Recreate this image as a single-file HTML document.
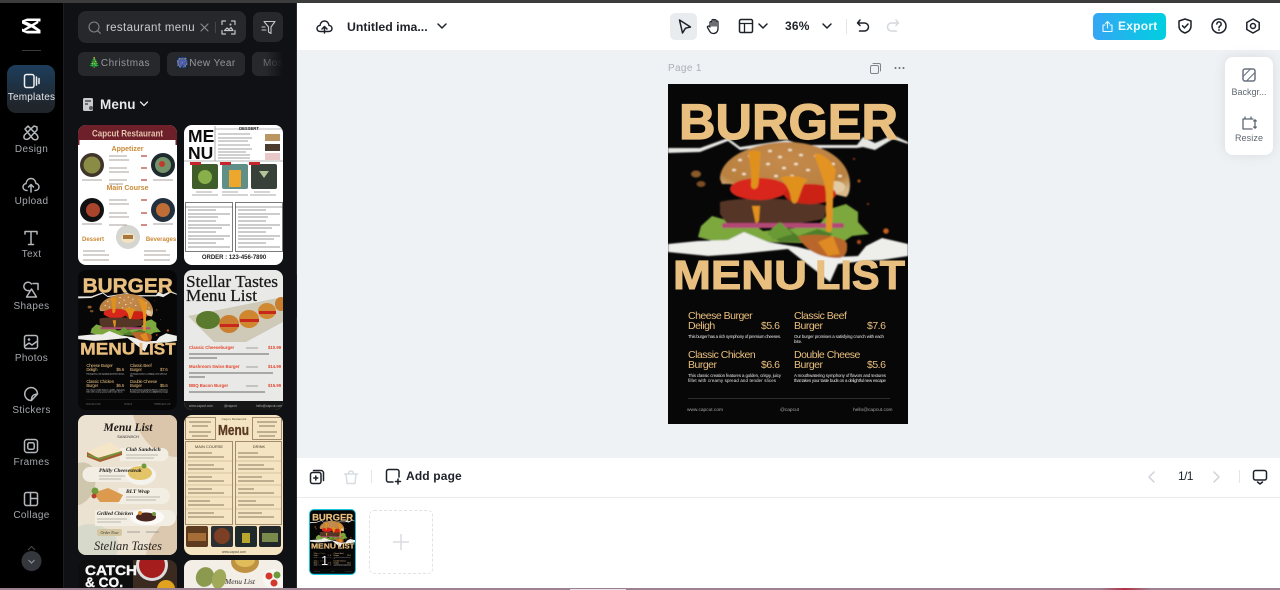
<!DOCTYPE html>
<html>
<head>
<meta charset="utf-8">
<title>Editor</title>
<style>
html,body{margin:0;padding:0;width:1280px;height:590px;overflow:hidden}
body{position:relative;background:#fff;font-family:"Liberation Sans","Noto Sans CJK SC",sans-serif}
.a{position:absolute}
svg{display:block;overflow:hidden}
.s{fill:none;stroke:currentColor;stroke-width:1.5;stroke-linecap:round;stroke-linejoin:round}
.nav{position:absolute;left:0;width:63px;text-align:center;font-size:10px;letter-spacing:.35px;color:#a4a8ad;line-height:12px}
.ic{position:absolute;width:18px;height:18px;left:22px;color:#b4b7bb}
.tag{position:absolute;top:52px;height:24px;line-height:24px;background:#26282c;border-radius:6px;color:#95989c;font-size:10px;letter-spacing:.45px;text-align:center;white-space:nowrap;overflow:hidden}
.th{position:absolute;width:99px;height:140px;border-radius:8px;overflow:hidden;filter:blur(.25px)}
.t{white-space:nowrap;position:absolute}
</style>
</head>
<body>
<svg width="0" height="0" style="position:absolute">
<defs>
<filter id="b"><feGaussianBlur stdDeviation=".7"/></filter>
<radialGradient id="bun" cx=".5" cy=".35" r=".7"><stop offset="0" stop-color="#c48a4c"/><stop offset=".75" stop-color="#b9803f"/><stop offset="1" stop-color="#d9b98a"/></radialGradient>
<symbol id="burger" viewBox="0 0 240 340">
<rect width="240" height="340" fill="#070707"/>
<g filter="url(#b)">
<path d="M0 64L32 64 60 54 72 63 119 56 135 61 189 61 195 53 207 59 225 51 240 58V60L225 55 207 66 195 63 189 64 135 64 119 59 72 66 60 57 32 68 0 69Z" fill="#e6e6e3"/>
<ellipse cx="28" cy="90" rx="5" ry="3.500" fill="#8a5a2a"/><ellipse cx="33" cy="100" rx="4.500" ry="3" fill="#7c4d22"/>
<circle cx="218" cy="147" r="2.800" fill="#c85d1a"/><circle cx="191" cy="97" r="1.500" fill="#b5541c"/><circle cx="191" cy="158" r="2.200" fill="#a8481a"/><circle cx="186" cy="75" r="1" fill="#a8481a"/><circle cx="200" cy="120" r="1" fill="#a8481a"/>
<path d="M30 153L33 142 44 132 58 136 70 130 95 147 150 142 165 124 178 120 190 128 190 138 201 150 184 152 172 160 95 158 60 156 45 157Z" fill="#7ba83c"/>
<path d="M100 150L112 138 130 152 150 145 165 150 150 158 112 158Z" fill="#4f7d2a"/>
<path d="M52 118C70 113 130 113 159 122L156 135 110 143 60 141 52 130Z" fill="#553425"/>
<rect x="54" y="139" width="122" height="5" rx="2" fill="#b24a74"/>
<path d="M100 148L112 138 125 150 105 156Z" fill="#6a9a34"/>
<path d="M52 95C52 72 88 58 119 58 152 58 182 74 182 100 182 108 180 112 178 113L150 106 60 100 54 100Z" fill="url(#bun)"/>
<g fill="#efe0c4">
<ellipse cx="72" cy="76" rx="2" ry="1.300"/><ellipse cx="82" cy="72" rx="2" ry="1.300"/><ellipse cx="66" cy="86" rx="2" ry="1.300"/><ellipse cx="102" cy="67" rx="2" ry="1.300"/><ellipse cx="112" cy="73" rx="2" ry="1.300"/><ellipse cx="122" cy="66" rx="2" ry="1.300"/><ellipse cx="133" cy="71" rx="2" ry="1.300"/><ellipse cx="100" cy="80" rx="2" ry="1.300"/><ellipse cx="116" cy="84" rx="2" ry="1.300"/><ellipse cx="128" cy="80" rx="2" ry="1.300"/><ellipse cx="140" cy="86" rx="2" ry="1.300"/><ellipse cx="108" cy="92" rx="2" ry="1.300"/><ellipse cx="124" cy="92" rx="2" ry="1.300"/><ellipse cx="148" cy="72" rx="2" ry="1.300"/><ellipse cx="165" cy="80" rx="2" ry="1.300"/><ellipse cx="172" cy="92" rx="2" ry="1.300"/><ellipse cx="158" cy="90" rx="2" ry="1.300"/><ellipse cx="76" cy="90" rx="2" ry="1.300"/>
</g>
<ellipse cx="167" cy="103" rx="10" ry="6" fill="#e2cba4"/>
<ellipse cx="91" cy="105" rx="29" ry="11" fill="#d9261c"/>
<ellipse cx="142" cy="110" rx="26" ry="10" fill="#cc2016"/>
<path d="M80 68C84 66 90 66 93 68 91 78 92 92 90 102 88 106 84 106 83 102 84 90 82 78 80 68Z" fill="#e0911f"/>
<path d="M112 94C120 90 132 92 140 96 134 100 133 110 129 118 126 121 124 119 123 115 122 106 118 100 112 94Z" fill="#e0911f"/>
<path d="M146 70C152 68 162 74 168 86 166 94 165 105 165 118L164 145C163 149 158 149 158 145L158 110C157 98 152 88 146 70Z" fill="#e39322"/>
<path d="M84 122H92L91 136C90 140 87 140 87 136Z" fill="#e0911f"/>
<path d="M0 160L30 157 60 156 76 148 100 158 130 163 168 173 190 172 198 162 214 154 240 160V172L214 176 196 177 170 180 162 198 152 190 120 165 70 170 40 172 0 168Z" fill="#eeeeeb"/>
<path d="M130 152C150 149 178 152 179 160 180 170 176 174 170 174 150 174 135 164 130 152Z" fill="#b8662c"/>
<path d="M150 158L165 152 172 170 160 172Z" fill="#df8a24"/>
</g>
<text x="11" y="55" font-size="50" font-weight="700" fill="#e9bf7f" stroke="#e9bf7f" stroke-width="1.200" textLength="219" lengthAdjust="spacingAndGlyphs" font-family="Liberation Sans">BURGER</text>
<text x="5" y="205" font-size="41" font-weight="700" fill="#e9bf7f" stroke="#e9bf7f" stroke-width="1" textLength="134" lengthAdjust="spacingAndGlyphs" font-family="Liberation Sans">MENU</text>
<text x="147" y="205" font-size="41" font-weight="700" fill="#e9bf7f" stroke="#e9bf7f" stroke-width="1" textLength="90" lengthAdjust="spacingAndGlyphs" font-family="Liberation Sans">LIST</text>
<g font-family="Liberation Sans" font-size="10.500" fill="#e9bf7f" letter-spacing="-.5">
<text x="20" y="235">Cheese Burger</text><text x="20" y="245">Deligh</text><text x="93" y="245">$5.6</text>
<text x="126" y="235">Classic Beef</text><text x="126" y="245">Burger</text><text x="199" y="245">$7.6</text>
<text x="20" y="274">Classic Chicken</text><text x="20" y="284">Burger</text><text x="93" y="284">$6.6</text>
<text x="126" y="274">Double Cheese</text><text x="126" y="284">Burger</text><text x="199" y="284">$5.6</text>
</g>
<g font-family="Liberation Sans" font-size="4.400" fill="#e6e6e6">
<text x="20" y="254" textLength="93">This burger has a rich symphony of premium cheeses.</text>
<text x="126" y="254" textLength="90">Our burger promises a satisfying crunch with each</text>
<text x="126" y="259">bite.</text>
<text x="20" y="293" textLength="93">This classic creation features a golden, crispy, juicy</text>
<text x="20" y="298" textLength="88">fillet with creamy spread and tender slices</text>
<text x="126" y="293" textLength="92">A mouthwatering symphony of flavors and textures</text>
<text x="126" y="298" textLength="92">that takes your taste buds on a delightful new escape</text>
</g>
<path d="M20 314.500H222" stroke="#2d2d2d"/>
<g font-family="Liberation Sans" font-size="4.800" fill="#a5a5a5">
<text x="19" y="327">www.capcut.com</text><text x="112" y="327">@capcut</text><text x="185" y="327">hello@capcut.com</text>
</g>
</symbol>
</defs>
</svg>

<!-- top strip -->
<div class="a" style="left:0;top:0;width:1280px;height:3px;background:#3c3c3c"></div>

<!-- rail -->
<div class="a" style="left:0;top:3px;width:63px;height:585px;background:#000"></div>
<div class="a" style="left:63px;top:3px;width:233px;height:585px;background:#101114;border-left:1px solid #1c1d20;box-sizing:border-box"></div>
<div class="a" style="left:296px;top:3px;width:1px;height:585px;background:#2a2a2a"></div>

<svg class="a" style="left:20px;top:17px" width="23" height="19" viewBox="0 0 23 19"><path d="M2 3.500L7 1.500H20.500V4.500H8.500L20.500 13V16.500H7L2 14.500V11.500L7 13.500H17L2 6.500Z M2 6.500V3.500M20.500 4.500L13 8.500" fill="#fff"/><path d="M4.500 5L18 13 M18 4.800 4.500 13" stroke="#fff" stroke-width="2.500" fill="none"/><path d="M5 4h12l-5.500 3.200zM5 13.800h12l-5.500-3.400z" fill="#000"/></svg>
<div class="a" style="left:22px;top:50px;width:19px;height:1px;background:#3a3a3a"></div>

<div class="a" style="left:7px;top:65px;width:48px;height:48px;border-radius:9px;background:linear-gradient(#1d3e5c,#20252b 85%)"></div>
<svg class="ic" style="top:72px;color:#f0f0f0" viewBox="0 0 18 18"><rect class="s" x="2.500" y="2.500" width="9.500" height="13" rx="2"/><path class="s" d="M14.500 5v8M17 6.500v5"/></svg>
<div class="nav" style="top:92px;color:#e4e6e8;letter-spacing:.2px">Templates</div>

<svg class="ic" style="top:124px" viewBox="0 0 18 18"><path class="s" d="M3 5l3-3 9 9c1.500 2 1 3.500 0 4.200s-2.500.8-4-.2zM15 3L12 2 2.500 11c-1 2-.5 3.500.5 4s2.500.6 4-.5l8-8.500z"/></svg>
<div class="nav" style="top:144px">Design</div>

<svg class="ic" style="top:176px" viewBox="0 0 18 18"><path class="s" d="M5 14.500C2.500 14.500 1 13 1 11c0-2 1.500-3.200 3-3.400C4.500 4.500 6.500 2.500 9 2.500s4.500 2 5 5c1.700.2 3 1.500 3 3.500 0 2-1.500 3.500-4 3.500M9 16V9M6.500 11L9 8.500l2.500 2.500"/></svg>
<div class="nav" style="top:196px">Upload</div>

<svg class="ic" style="top:229px" viewBox="0 0 18 18"><path class="s" d="M3 5V2.500h12V5M9 2.500v13M6.500 15.500h5"/></svg>
<div class="nav" style="top:249px">Text</div>

<svg class="ic" style="top:281px" viewBox="0 0 18 18"><path class="s" d="M7 9.500A4.200 4.200 0 1 1 9.500 3M11 2.500h5v6M9.500 8l5 8H4.500z"/></svg>
<div class="nav" style="top:301px">Shapes</div>

<svg class="ic" style="top:333px" viewBox="0 0 18 18"><rect class="s" x="2.500" y="2.500" width="13" height="13" rx="2"/><path class="s" d="M3 13l4-3 3 2 5.500-4"/><circle cx="7" cy="6.500" r="1.300" fill="currentColor"/></svg>
<div class="nav" style="top:353px">Photos</div>

<svg class="ic" style="top:385px" viewBox="0 0 18 18"><path class="s" d="M9 2.500a6.500 6.500 0 0 1 6.500 6.500l-6 6.500A6.500 6.500 0 0 1 9 2.500zM9.500 15.500c0-4 1-6 6-6.500"/></svg>
<div class="nav" style="top:405px">Stickers</div>

<svg class="ic" style="top:437px" viewBox="0 0 18 18"><rect class="s" x="2.500" y="2.500" width="13" height="13" rx="2.500"/><rect class="s" x="5.800" y="5.800" width="6.400" height="6.400" rx="1.500"/></svg>
<div class="nav" style="top:457px">Frames</div>

<svg class="ic" style="top:490px" viewBox="0 0 18 18"><rect class="s" x="2.500" y="2.500" width="13" height="13" rx="2"/><path class="s" d="M8.500 2.500v13M8.500 8.500h7"/></svg>
<div class="nav" style="top:510px">Collage</div>

<svg class="a" style="left:21px;top:543px" width="21" height="28" viewBox="0 0 21 28"><path d="M7 7l3.500-3.500L14 7" stroke="#45484c" fill="none"/><circle cx="10.500" cy="18" r="10" fill="#34373c"/><path d="M7.500 17l3 3 3-3" stroke="#8d9196" stroke-width="1.200" fill="none"/></svg>

<!-- search -->
<div class="a" style="left:78px;top:11px;width:168px;height:32px;border-radius:8px;background:#26282c"></div>
<svg class="a" style="left:87px;top:20px;color:#7f8388" width="15" height="15" viewBox="0 0 15 15"><circle class="s" style="stroke-width:1.100" cx="7" cy="7" r="5"/><path class="s" style="stroke-width:1.100" d="M10.800 10.800l2.500 2.500"/></svg>
<div class="t" style="left:106px;top:20px;font-size:11.500px;letter-spacing:.35px;color:#c9cbce;line-height:16px">restaurant menu</div>
<svg class="a" style="left:199px;top:22px;color:#8a8d91" width="11" height="11" viewBox="0 0 11 11"><path class="s" style="stroke-width:1.100" d="M2 2l7 7M9 2l-7 7"/></svg>
<div class="a" style="left:215px;top:22px;width:1px;height:11px;background:#46484c"></div>
<svg class="a" style="left:221px;top:20px;color:#c4c6c9" width="15" height="15" viewBox="0 0 15 15"><path class="s" style="stroke-width:1.200" d="M1 4.500V1h3.500M10.500 1H14v3.500M1 10.500V14h3.500M10.500 14H14v-3.500M3.500 10.500l2.500-2.500 2 1.500 2-2 2 3z"/><circle cx="9.500" cy="4.500" r="1" fill="currentColor"/></svg>
<div class="a" style="left:253px;top:12px;width:30px;height:30px;border-radius:7px;background:#26282c"></div>
<svg class="a" style="left:261px;top:20px;color:#c4c6c9" width="15" height="15" viewBox="0 0 15 15"><path class="s" style="stroke-width:1.100" d="M3 1.500h11L10 7v6.500L7.500 12V7zM1 7h3M1 10h4"/></svg>

<div class="tag" style="left:78px;width:82px">🎄Christmas</div>
<div class="tag" style="left:167px;width:78px">🎆New Year</div>
<div class="tag" style="left:252px;width:31px;text-align:left;padding-left:11px;box-sizing:border-box;color:#6e7174">Most</div>
<div class="a" style="left:266px;top:52px;width:17px;height:24px;background:linear-gradient(90deg,rgba(16,17,20,0),#101114)"></div>

<svg class="a" style="left:82px;top:97px" width="13" height="15" viewBox="0 0 13 15"><rect x="1" y="1" width="10" height="13" rx="1.500" fill="#c9cbce"/><path d="M3 4h6M3 7h3" stroke="#33363a" stroke-width="1.200"/><circle cx="9" cy="11" r="2" fill="#55585c"/></svg>
<div class="t" style="left:100px;top:96px;font-size:13.500px;font-weight:700;letter-spacing:.1px;color:#e6e7e9;line-height:17px">Menu</div>
<svg class="a" style="left:139px;top:100px;color:#e6e7e9" width="10" height="8" viewBox="0 0 10 8"><path class="s" style="stroke-width:1.300" d="M1.500 2l3.500 3.500L8.500 2"/></svg>

<!-- template 1 -->
<div class="th" style="left:78px;top:125px;background:#fff">
<svg width="99" height="140" viewBox="0 0 99 140">
<rect width="99" height="15" fill="#6d1f2a"/><rect y="15" width="1.500" height="5" fill="#6d1f2a"/><rect x="97.500" y="15" width="1.500" height="5" fill="#6d1f2a"/>
<text x="14" y="11.500" font-size="9.500" font-weight="700" fill="#e4c4ad" textLength="71" lengthAdjust="spacingAndGlyphs" font-family="Liberation Sans">Capcut Restaurant</text>
<g font-family="Liberation Sans" font-weight="700" fill="#c98a35">
<text x="49.500" y="26" text-anchor="middle" font-size="7">Appetizer</text>
<text x="49.500" y="65" text-anchor="middle" font-size="7">Main Course</text>
<text x="15" y="116" text-anchor="middle" font-size="6">Dessert</text>
<text x="83" y="116" text-anchor="middle" font-size="6">Beverages</text>
</g>
<circle cx="14" cy="40" r="12" fill="#40352b"/><circle cx="14" cy="40" r="8.500" fill="#8a8b45"/>
<circle cx="85" cy="40" r="12" fill="#1d2a2e"/><circle cx="85" cy="40" r="8" fill="#75936b"/><circle cx="84" cy="39" r="3" fill="#c0392b"/>
<circle cx="14" cy="85" r="12" fill="#111"/><circle cx="15" cy="85" r="7" fill="#a9452c"/>
<circle cx="85" cy="85" r="12" fill="#22303e"/><circle cx="85" cy="85" r="7" fill="#bd6d35"/>
<circle cx="50" cy="112" r="12" fill="#d5d5d2"/><ellipse cx="50" cy="113" rx="7" ry="5" fill="#f1e5c0"/><rect x="45" y="110" width="10" height="4" fill="#a9773f"/>
<g stroke="#a8a09e" stroke-width=".9">
<path d="M31 31h18M31 35h20M31 43h18M31 47h20M31 55h18M31 59h14M31 75h18M31 79h20M31 88h18M31 92h20M31 100h18M5 126h22M5 130h26M5 135h26M66 126h22M66 130h26M66 135h26M4 55h20M75 55h20M4 99h20M75 99h20"/>
</g>
<g stroke="#c06a5f" stroke-width="1.500"><path d="M63 31h6M63 43h6M63 55h6M63 75h6M63 88h6M63 100h6"/></g>
</svg>
</div>

<!-- template 2 -->
<div class="th" style="left:184px;top:125px;background:#fff">
<svg width="99" height="140" viewBox="0 0 99 140">
<g font-family="Liberation Sans" font-weight="700" fill="#0b0b0b" font-size="17.500"><text x="4" y="17">ME</text><text x="4" y="34">NU</text></g>
<path d="M31 1v35H98M0 36h99M31 4h67" stroke="#777" stroke-width=".6" fill="none"/>
<text x="65" y="5" text-anchor="middle" font-size="4.200" font-weight="700" fill="#222" font-family="Liberation Sans">DESSERT</text>
<g stroke="#a0a0a0" stroke-width=".9"><path d="M34 9h32M34 13h34M34 16h30M34 20h32M34 24h34M34 27h28M34 30h32M34 33h32"/></g>
<rect x="81" y="9" width="15" height="7" fill="#b99664"/><rect x="81" y="19" width="15" height="7" fill="#4a3d30"/><rect x="81" y="28" width="15" height="7" fill="#e8c8c8"/>
<rect x="8" y="39" width="26" height="25" rx="2" fill="#3f5d2a"/><circle cx="21" cy="52" r="7" fill="#87b04a"/>
<rect x="38" y="39" width="26" height="25" rx="2" fill="#5f8f86"/><rect x="45" y="45" width="12" height="17" fill="#eca72c"/>
<rect x="67" y="39" width="26" height="25" rx="2" fill="#38403a"/><path d="M75 46h10l-5 7z" fill="#b7c39a"/>
<g fill="#c7242b"><rect x="6" y="37" width="11" height="3"/><rect x="36" y="37" width="11" height="3"/><rect x="65" y="37" width="11" height="3"/></g>
<g stroke="#aaa" stroke-width=".9"><path d="M12 67h16M38 67h16M70 67h16M8 70h26M38 70h26M66 70h26"/></g>
<rect x="1.500" y="77.500" width="47" height="49" fill="none" stroke="#444" stroke-width=".7"/><rect x="51.500" y="77.500" width="47" height="49" fill="none" stroke="#444" stroke-width=".7"/>
<path d="M1 82h48M51 82h48" stroke="#444" stroke-width=".6"/>
<g stroke="#999" stroke-width=".9"><path d="M4 85h28M4 89h42M4 92h30M4 96h28M4 100h42M4 103h34M4 107h28M4 111h42M4 114h36M4 118h28M4 122h42M54 85h28M54 89h42M54 92h30M54 96h28M54 100h42M54 103h34M54 107h28M54 111h42M54 114h36M54 118h28M54 122h42"/></g>
<text x="50" y="134" text-anchor="middle" font-size="6" font-weight="700" fill="#222" font-family="Liberation Sans">ORDER : 123-456-7890</text>
</svg>
</div>

<!-- template 3 burger -->
<div class="th" style="left:78px;top:270px"><svg width="99" height="140" viewBox="0 0 240 340"><use href="#burger" width="240" height="340"/></svg></div>

<!-- template 4 -->
<div class="th" style="left:184px;top:270px;background:#e9e9e7">
<svg width="99" height="140" viewBox="0 0 99 140">
<g font-family="Liberation Serif" fill="#191919" stroke="#191919" stroke-width=".25" font-size="16.500"><text x="2" y="17" textLength="92" lengthAdjust="spacingAndGlyphs">Stellar Tastes</text><text x="2" y="31" textLength="71" lengthAdjust="spacingAndGlyphs">Menu List</text></g>
<path d="M4 46L99 27V52L62 72 30 72Z" fill="#cfc9b8"/>
<ellipse cx="24" cy="50" rx="12" ry="9" fill="#5a7a2e"/>
<ellipse cx="45" cy="54" rx="10" ry="9" fill="#c97f2f"/><rect x="36" y="54" width="19" height="3" fill="#c9261c"/>
<ellipse cx="65" cy="49" rx="10" ry="9" fill="#cf862e"/><rect x="56" y="49" width="19" height="3" fill="#c9261c"/>
<ellipse cx="83" cy="41" rx="9" ry="8" fill="#d08a33"/><rect x="75" y="41" width="17" height="3" fill="#c9261c"/>
<ellipse cx="97" cy="34" rx="6" ry="7" fill="#c87e2d"/>
<g font-family="Liberation Sans" font-size="4.300" font-weight="700" fill="#e4452c">
<text x="5" y="79">Classic Cheeseburger</text><text x="84" y="79">$10.99</text>
<text x="5" y="98">Mushroom Swiss Burger</text><text x="84" y="98">$14.99</text>
<text x="5" y="117">BBQ Bacon Burger</text><text x="84" y="117">$15.99</text>
</g>
<path d="M62 78h12M62 97h12M62 116h12" stroke="#888" stroke-width=".8"/>
<g stroke="#666" stroke-width=".9"><path d="M5 84h80M5 88h28M5 103h84M5 107h16M5 122h76"/></g>
<rect y="131" width="99" height="9" fill="#171717"/>
<g font-family="Liberation Sans" font-size="3.200" fill="#aaa"><text x="5" y="137">www.capcut.com</text><text x="40" y="137">@capcut</text><text x="72" y="137">hello@capcut.com</text></g>
</svg>
</div>

<!-- template 5 -->
<div class="th" style="left:78px;top:415px;background:#ebe2d2">
<svg width="99" height="140" viewBox="0 0 99 140">
<path d="M55 0H99V42C80 42 62 26 55 0Z" fill="#dcc6ab"/>
<path d="M0 48C20 44 22 68 12 82 5 90 0 90 0 90Z" fill="#cfc7ad"/>
<path d="M0 112C18 102 50 120 38 140H0Z" fill="#d7d9cb"/>
<path d="M99 100V140H68C70 125 80 108 99 100Z" fill="#dcc8ae"/>
<text x="50" y="16" text-anchor="middle" font-size="11.500" font-style="italic" font-weight="700" fill="#1c1714" font-family="Liberation Serif">Menu List</text>
<text x="50" y="23" text-anchor="middle" font-size="4" fill="#333" font-family="Liberation Sans">SANDWICH</text>
<path d="M42 33H84a5 5 0 0 1 0 13H42ZM12 52H60V67H12a7 7 0 0 1 0-15ZM40 73H84a6 6 0 0 1 0 16H40ZM17 95H90a7 7 0 0 1 0 16H17Z" fill="#f2eee4"/>
<path d="M9 37L32 27 44 36 20 43Z" fill="#f4e6c6"/><path d="M9 37L20 43 44 36V40L22 47 9 42Z" fill="#a65c30"/><path d="M10 40L22 44 43 37" stroke="#6f9a3a" stroke-width="1.500" fill="none"/>
<ellipse cx="63" cy="60" rx="15" ry="10" fill="#f5f3ee"/><ellipse cx="62" cy="58" rx="12" ry="7" fill="#e4c468"/><circle cx="66" cy="51" r="2.500" fill="#6f9a3a"/>
<path d="M15 78L30 73 45 80 41 87H22Z" fill="#dc9a4f"/><circle cx="17" cy="76" r="3.500" fill="#6f9a3a"/><circle cx="16" cy="81" r="2.500" fill="#b5432c"/>
<ellipse cx="69" cy="102" rx="17" ry="8" fill="#fbfaf7"/><ellipse cx="68" cy="102" rx="10" ry="4.500" fill="#4a2620"/><circle cx="62" cy="98" r="2" fill="#d9902f"/><circle cx="76" cy="99" r="2" fill="#6f9a3a"/>
<g font-family="Liberation Serif" font-size="5.500" font-style="italic" font-weight="700" fill="#1c1714"><text x="48" y="36">Club Sandwich</text><text x="21" y="57">Philly Cheesesteak</text><text x="48" y="78">BLT Wrap</text><text x="19" y="100">Grilled Chicken</text></g>
<g stroke="#a8a39a" stroke-width=".8"><path d="M48 40h32M48 43h28M21 61h26M21 64h22M48 82h34M48 85h30M19 104h30M19 107h24"/></g>
<rect x="19" y="114" width="25" height="7" rx="2" fill="#d4c6a1"/>
<text x="31.500" y="119" text-anchor="middle" font-size="4" font-style="italic" fill="#333" font-family="Liberation Serif">Order Now</text>
<path d="M49 117h13M68 117h13" stroke="#888" stroke-width=".8"/>
<text x="50" y="135" text-anchor="middle" font-size="13" font-style="italic" fill="#2a2622" textLength="68" lengthAdjust="spacingAndGlyphs" font-family="Liberation Serif">Stellan Tastes</text>
</svg>
</div>

<!-- template 6 -->
<div class="th" style="left:184px;top:415px;background:#f5e4c2">
<svg width="99" height="140" viewBox="0 0 99 140">
<g fill="none" stroke="#6b5138" stroke-width=".6"><rect x="1.500" y="2.500" width="30" height="22"/><rect x="68.500" y="2.500" width="29" height="22"/><rect x="1.500" y="26.500" width="47" height="83"/><rect x="51.500" y="26.500" width="46" height="83"/></g>
<text x="34" y="20" font-size="15" font-weight="700" fill="#5a3a22" stroke="#5a3a22" stroke-width=".3" textLength="31" lengthAdjust="spacingAndGlyphs" font-family="Liberation Sans">Menu</text>
<text x="50" y="5" text-anchor="middle" font-size="3" fill="#553" font-family="Liberation Sans">Cagu's Restaurant</text>
<g font-family="Liberation Sans" font-size="4" fill="#4b3a28" text-anchor="middle"><text x="25" y="33">MAIN COURSE</text><text x="75" y="33">DRINK</text></g>
<g stroke="#8a7860" stroke-width=".9"><path d="M5 7h22M8 11h16M5 17h22M8 21h16M73 7h20M75 11h16M73 17h20M75 21h16M4 38h24M4 42h36M4 50h26M4 54h36M4 62h24M4 66h36M4 74h24M4 78h36M4 86h22M4 90h36M4 98h26M4 102h36M54 38h20M54 42h36M54 50h26M54 54h36M54 62h24M54 66h36M54 74h16M54 78h36M54 86h18M54 90h36M54 98h24M54 102h36"/></g>
<g stroke="#b9a27e" stroke-width=".6"><path d="M2 46h46M2 58h46M2 70h46M2 82h46M2 94h46M52 46h45M52 58h45M52 70h45M52 82h45M52 94h45"/></g>
<rect x="2" y="111" width="22" height="21" rx="2" fill="#5f3b20"/><rect x="4" y="118" width="18" height="8" fill="#a66e37"/>
<rect x="27" y="111" width="22" height="21" rx="2" fill="#2c3033"/><circle cx="38" cy="121" r="8" fill="#7b3f25"/>
<rect x="51" y="111" width="22" height="21" rx="2" fill="#1f2a2a"/><rect x="58" y="118" width="8" height="10" fill="#b9a62f"/>
<rect x="75" y="111" width="22" height="21" rx="2" fill="#22282a"/><rect x="78" y="118" width="16" height="9" fill="#7a8a4a"/>
<text x="50" y="138" text-anchor="middle" font-size="3.200" fill="#443" font-family="Liberation Sans">www.capcut.com</text>
</svg>
</div>

<!-- template 7 (cut off at the frame edge) -->
<div class="th" style="left:78px;top:560px;height:28px;border-radius:8px 8px 0 0;background:#0e0e0e;filter:none">
<svg width="99" height="28" viewBox="0 0 99 28">
<rect x="55" y="0" width="44" height="28" fill="#3a2a20"/>
<circle cx="74" cy="5" r="16" fill="#dcdcdc"/><circle cx="74" cy="5" r="13" fill="#a61d1d"/>
<circle cx="88" cy="29" r="9" fill="#e0a21f"/>
<g font-family="Liberation Sans" font-weight="700" fill="#f6f6f6" stroke="#f6f6f6" stroke-width=".4" font-size="14"><text x="7" y="15" textLength="52" lengthAdjust="spacingAndGlyphs">CATCH</text><text x="7" y="27" textLength="38" lengthAdjust="spacingAndGlyphs">&amp; CO.</text></g>
</svg>
</div>

<!-- template 8 (cut off at the frame edge) -->
<div class="th" style="left:184px;top:560px;height:28px;border-radius:8px 8px 0 0;background:#f3efe7;filter:none">
<svg width="99" height="28" viewBox="0 0 99 28">
<ellipse cx="61" cy="2" rx="14" ry="11" fill="#bf9242"/><ellipse cx="61" cy="0" rx="10" ry="7" fill="#e1bc5a"/>
<ellipse cx="21" cy="17" rx="9" ry="10" fill="#8b9a4e" transform="rotate(25 21 17)"/><ellipse cx="35" cy="19" rx="7" ry="10" fill="#a0a85a" transform="rotate(15 35 19)"/>
<circle cx="89" cy="19" r="10" fill="#f6f6f2"/><circle cx="85" cy="16" r="3.500" fill="#d4382c"/><circle cx="93" cy="15" r="3.500" fill="#6e9a3c"/><circle cx="90" cy="23" r="3.500" fill="#d4382c"/>
<text x="41" y="24" font-size="7.500" font-style="italic" fill="#2a2622" textLength="30" lengthAdjust="spacingAndGlyphs" font-family="Liberation Serif">Menu List</text>
</svg>
</div>

<!-- panel handle -->
<svg class="a" style="left:296px;top:274px" width="6" height="44" viewBox="0 0 6 44"><path d="M0 0C4 4 6 7 6 11V33C6 37 4 40 0 44Z" fill="#1b1c1f"/><path d="M3.500 18L1.800 22 3.500 26" stroke="#5a5d60" fill="none"/></svg>

<!-- top bar -->
<div class="a" style="left:297px;top:3px;width:983px;height:47px;background:#fff"></div>
<svg class="a" style="left:315px;top:17px;color:#1d2129" width="19" height="19" viewBox="0 0 19 19"><path class="s" d="M5.500 14.500C3 14.500 2 13 2 11.500c0-1.700 1.300-3 3-3.100C5.500 5.500 7.500 4 9.500 4s4 1.500 4.500 4.400c1.700.1 3 1.400 3 3.100 0 1.500-1 3-3.500 3H5.500zM9.500 16v-6M7 12l2.500-2.500L12 12"/></svg>
<div class="t" style="left:347px;top:19px;font-size:12.300px;font-weight:700;color:#1d2129;line-height:17px">Untitled ima...</div>
<svg class="a" style="left:436px;top:22px;color:#1d2129" width="12" height="9" viewBox="0 0 12 9"><path class="s" d="M2 2l4 4 4-4"/></svg>

<div class="a" style="left:670px;top:13px;width:27px;height:27px;border-radius:5px;background:#e8ecef"></div>
<svg class="a" style="left:676px;top:18px;color:#1d2129" width="17" height="17" viewBox="0 0 17 17"><path class="s" d="M3.500 2L14.500 9l-5 1.200-3 4.800z"/></svg>
<svg class="a" style="left:705px;top:17px;color:#1d2129" width="18" height="18" viewBox="0 0 18 18"><path class="s" style="stroke-width:1.300" d="M5 10V5.500a1 1 0 0 1 2 0V3.500a1 1 0 0 1 2 0a1 1 0 0 1 2 .2V5a1 1 0 0 1 2 0v6.500c0 3-2 5-4.500 5S5.500 15.500 4.500 14L2.500 10.500c-.5-1 .8-2 1.700-1.200L5 10M7 5.500V9M9 3.500V9M11 4V9"/></svg>
<svg class="a" style="left:738px;top:18px;color:#1d2129" width="16" height="16" viewBox="0 0 16 16"><rect class="s" x="1.500" y="1.500" width="13" height="13" rx="1.500"/><path class="s" d="M1.500 5.500h13M6.500 5.500v9" style="stroke-width:1.300"/></svg>
<svg class="a" style="left:757px;top:22px;color:#1d2129" width="12" height="9" viewBox="0 0 12 9"><path class="s" d="M2 2l4 4 4-4"/></svg>
<div class="t" style="left:785px;top:18px;font-size:12px;font-weight:700;letter-spacing:.2px;color:#1d2129;line-height:16px">36%</div>
<svg class="a" style="left:821px;top:22px;color:#1d2129" width="12" height="9" viewBox="0 0 12 9"><path class="s" d="M2 2l4 4 4-4"/></svg>
<div class="a" style="left:846px;top:19px;width:1px;height:15px;background:#e2e5e8"></div>
<svg class="a" style="left:855px;top:18px;color:#1d2129" width="16" height="16" viewBox="0 0 16 16"><path class="s" d="M5 2L2.500 5 5 7.500M3 5h6.500a3.800 3.800 0 0 1 0 8H4.500"/></svg>
<svg class="a" style="left:885px;top:18px;color:#d4d9de" width="16" height="16" viewBox="0 0 16 16"><path class="s" d="M11 2l2.500 3L11 7.500M13 5H6.500a3.800 3.800 0 0 0 0 8h5"/></svg>

<div class="a" style="left:1093px;top:13px;width:73px;height:27px;border-radius:5px;background:linear-gradient(90deg,#34a6f4,#00cfe0)"></div>
<svg class="a" style="left:1101px;top:20px;color:#e8fbff" width="13" height="13" viewBox="0 0 13 13"><path class="s" style="stroke-width:1.100" d="M4 5H2v6.500h9V5H9M6.500 8V1.500M4.500 3.500l2-2 2 2"/></svg>
<div class="t" style="left:1118px;top:18px;font-size:12px;font-weight:700;letter-spacing:.25px;color:#eafcff;line-height:16px">Export</div>
<svg class="a" style="left:1176px;top:17px;color:#1d2129" width="18" height="18" viewBox="0 0 18 18"><path class="s" d="M9 2l6 2v5c0 3.500-2.500 5.800-6 7-3.500-1.200-6-3.500-6-7V4zM6.500 8.800l2 2L12 7"/></svg>
<svg class="a" style="left:1210px;top:17px;color:#1d2129" width="18" height="18" viewBox="0 0 18 18"><circle class="s" cx="9" cy="9" r="7"/><path class="s" d="M6.800 7a2.200 2.200 0 1 1 3.400 1.900c-.8.500-1.200 1-1.200 1.800"/><circle cx="9" cy="13" r=".9" fill="currentColor"/></svg>
<svg class="a" style="left:1244px;top:17px;color:#1d2129" width="18" height="18" viewBox="0 0 18 18"><path class="s" d="M9 2l6.200 3.500v7L9 16l-6.200-3.500v-7z"/><circle class="s" cx="9" cy="9" r="2.500"/></svg>

<!-- canvas -->
<div class="a" style="left:297px;top:50px;width:983px;height:408px;background:#eff2f5"></div>
<div class="t" style="left:668px;top:62px;font-size:10px;letter-spacing:.35px;color:#a9b0b8;line-height:13px">Page 1</div>
<svg class="a" style="left:869px;top:62px;color:#7c848c" width="13" height="13" viewBox="0 0 13 13"><rect class="s" style="stroke-width:1" x="1.500" y="3.500" width="8" height="8" rx="1.500"/><path class="s" style="stroke-width:1" d="M4 1.500h6a1.500 1.500 0 0 1 1.500 1.500v6"/></svg>
<svg class="a" style="left:893px;top:65px" width="13" height="6" viewBox="0 0 13 6"><circle cx="2.500" cy="3" r="1" fill="#656c74"/><circle cx="6.500" cy="3" r="1" fill="#656c74"/><circle cx="10.500" cy="3" r="1" fill="#656c74"/></svg>
<svg class="a" style="left:668px;top:84px" width="240" height="340" viewBox="0 0 240 340"><use href="#burger" width="240" height="340"/></svg>

<div class="a" style="left:1225px;top:57px;width:48px;height:98px;border-radius:8px;background:#fff;box-shadow:0 0 12px rgba(60,70,80,.12)"></div>
<svg class="a" style="left:1241px;top:67px;color:#6b7280" width="16" height="16" viewBox="0 0 16 16"><rect class="s" x="2" y="2" width="12" height="12" rx="2"/><path class="s" d="M2.500 9L9 2.500M6 13.500L13.500 6" style="stroke-width:1.100"/></svg>
<div class="t" style="left:1225px;width:48px;top:86px;text-align:center;font-size:9px;color:#5e6670;line-height:12px">Backgr...</div>
<svg class="a" style="left:1241px;top:115px;color:#5e6670" width="16" height="16" viewBox="0 0 16 16"><path class="s" style="stroke-width:1.300" d="M2 4h10M2 4v10h9M4 2v2M10 2v2M14 5v8M12.800 6L14 4.800 15.200 6M12.800 12L14 13.200 15.200 12"/></svg>
<div class="t" style="left:1225px;width:48px;top:132px;text-align:center;font-size:9px;letter-spacing:.1px;color:#5e6670;line-height:12px">Resize</div>

<!-- page toolbar -->
<div class="a" style="left:297px;top:458px;width:983px;height:39px;background:#fff;border-bottom:1px solid #e9ebee"></div>
<svg class="a" style="left:309px;top:469px;color:#1d2129" width="16" height="16" viewBox="0 0 16 16"><rect class="s" x="1.500" y="3.500" width="10.500" height="11" rx="2"/><path class="s" d="M4.500 1.500H12a2.500 2.500 0 0 1 2.500 2.500v7.500M6.800 7v4M4.800 9h4"/></svg>
<svg class="a" style="left:343px;top:469px;color:#d8dde2" width="16" height="16" viewBox="0 0 16 16"><path class="s" d="M1.500 5h13M3 5l1 9.500h8L13 5M5.500 5C5.500 3 6.500 2 8 2s2.500 1 2.500 3"/></svg>
<div class="a" style="left:371px;top:470px;width:1px;height:13px;background:#e2e5e8"></div>
<svg class="a" style="left:385px;top:468px;color:#1d2129" width="17" height="17" viewBox="0 0 17 17"><path class="s" d="M8 14H3.500a2 2 0 0 1-2-2V3.500a2 2 0 0 1 2-2H12a2 2 0 0 1 2 2V9M13 11v5M10.500 13.500h5"/></svg>
<div class="t" style="left:406px;top:468px;font-size:12px;font-weight:700;letter-spacing:.15px;color:#1d2129;line-height:17px">Add page</div>

<svg class="a" style="left:1146px;top:470px;color:#ced3d8" width="12" height="14" viewBox="0 0 12 14"><path class="s" d="M8 2L3 7l5 5"/></svg>
<div class="t" style="left:1178px;top:468px;font-size:12px;color:#1d2129;letter-spacing:-.6px;line-height:16px">1/1</div>
<svg class="a" style="left:1210px;top:470px;color:#ced3d8" width="12" height="14" viewBox="0 0 12 14"><path class="s" d="M4 2l5 5-5 5"/></svg>
<div class="a" style="left:1239px;top:470px;width:1px;height:13px;background:#e2e5e8"></div>
<svg class="a" style="left:1252px;top:469px;color:#1d2129" width="16" height="16" viewBox="0 0 16 16"><rect class="s" x="1.500" y="1.500" width="13" height="9.500" rx="2"/><path class="s" d="M5.500 13l2.500 2 2.500-2"/></svg>

<!-- thumbnails strip -->
<div class="a" style="left:309px;top:509px;width:47px;height:66px;border-radius:5px;background:#16c5dc"></div>
<svg class="a" style="left:310px;top:510px;border-radius:4px" width="45" height="64" viewBox="0 0 240 340"><use href="#burger" width="240" height="340"/></svg>
<div class="a" style="left:317px;top:552px;width:13px;height:17px;background:rgba(0,0,0,.55);border-radius:2px"></div>
<div class="t" style="left:321px;top:553px;font-size:13px;color:#f2f2f2;line-height:15px">1</div>
<div class="a" style="left:369px;top:510px;width:64px;height:64px;box-sizing:border-box;border:1px dashed #dfe2e6;border-radius:5px"></div>
<svg class="a" style="left:391px;top:532px" width="20" height="20" viewBox="0 0 20 20"><path d="M10 2v16M2 10h16" stroke="#d9dce0" stroke-width="1.500"/></svg>

<!-- bottom strip -->
<div class="a" style="left:0;top:588px;width:1280px;height:2px;background:#9c8290"></div>
<div class="a" style="left:570px;top:589px;width:56px;height:1px;background:#e6e1e4"></div>
<div class="a" style="left:1100px;top:588px;width:50px;height:2px;background:linear-gradient(90deg,#9c8290,#b23048 50%,#9c8290)"></div>
</body>
</html>
